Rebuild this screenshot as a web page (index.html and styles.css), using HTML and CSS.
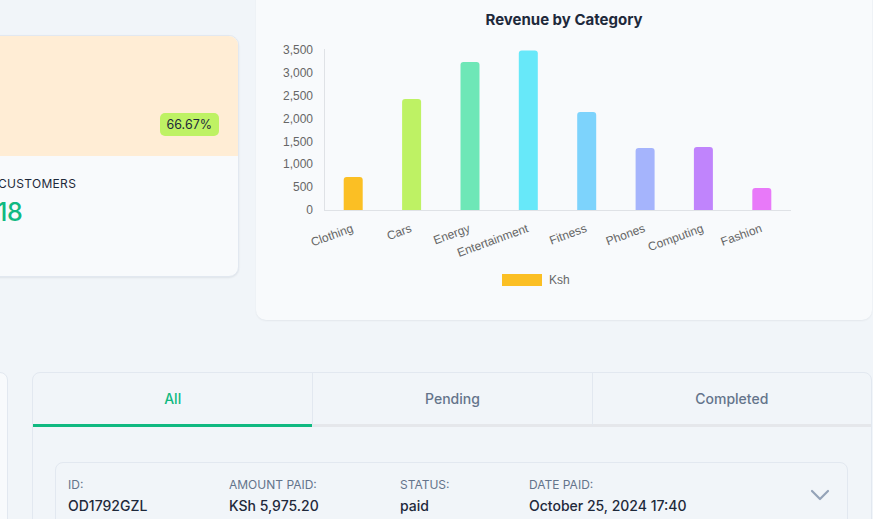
FILE: index.html
```html
<!DOCTYPE html>
<html lang="en">
<head>
<meta charset="utf-8">
<title>Dashboard</title>
<link rel="stylesheet" href="styles.css">
</head>
<body>
<div class="page">
  <section class="top-row">
    <div class="stat-card">
      <div class="stat-head">
        <span class="badge">66.67%</span>
      </div>
      <div class="stat-body">
        <div class="stat-label">CUSTOMERS</div>
        <div class="stat-value">18</div>
      </div>
    </div>

    <div class="chart-card">
      <svg class="chart" width="616" height="340" viewBox="256 -20 616 340" xmlns="http://www.w3.org/2000/svg">
        <text class="chart-title" x="564" y="20.5">Revenue by Category</text>

        <g class="y-labels">
          <text x="313" y="211">0</text>
          <text x="313" y="188.14">500</text>
          <text x="313" y="165.29">1,000</text>
          <text x="313" y="142.43">1,500</text>
          <text x="313" y="119.57">2,000</text>
          <text x="313" y="96.71">2,500</text>
          <text x="313" y="73.86">3,000</text>
          <text x="313" y="51">3,500</text>
        </g>

        <line class="axis" x1="324.5" y1="49" x2="324.5" y2="210.5"/>
        <line class="axis" x1="324" y1="210.5" x2="791" y2="210.5"/>

        <path fill="#fbbf24" d="M343.7 210V180Q343.7 177 346.7 177H359.7Q362.7 177 362.7 180V210Z"/>
        <path fill="#bef264" d="M402.1 210V102Q402.1 99 405.1 99H418.1Q421.1 99 421.1 102V210Z"/>
        <path fill="#6ee7b7" d="M460.5 210V65Q460.5 62 463.5 62H476.5Q479.5 62 479.5 65V210Z"/>
        <path fill="#67e8f9" d="M518.8 210V53.5Q518.8 50.5 521.8 50.5H534.8Q537.8 50.5 537.8 53.5V210Z"/>
        <path fill="#7dd3fc" d="M577.2 210V115Q577.2 112 580.2 112H593.2Q596.2 112 596.2 115V210Z"/>
        <path fill="#a5b4fc" d="M635.6 210V151Q635.6 148 638.6 148H651.6Q654.6 148 654.6 151V210Z"/>
        <path fill="#c084fc" d="M693.9 210V150Q693.9 147 696.9 147H709.9Q712.9 147 712.9 150V210Z"/>
        <path fill="#e879f9" d="M752.3 210V191Q752.3 188 755.3 188H768.3Q771.3 188 771.3 191V210Z"/>

        <g class="x-labels">
          <text x="353" y="228.5" transform="rotate(-20 353 228.5)">Clothing</text>
          <text x="411.4" y="228.5" transform="rotate(-20 411.4 228.5)">Cars</text>
          <text x="469.8" y="228.5" transform="rotate(-20 469.8 228.5)">Energy</text>
          <text x="528.1" y="228.5" transform="rotate(-20 528.1 228.5)">Entertainment</text>
          <text x="586.5" y="228.5" transform="rotate(-20 586.5 228.5)">Fitness</text>
          <text x="644.9" y="228.5" transform="rotate(-20 644.9 228.5)">Phones</text>
          <text x="703.2" y="228.5" transform="rotate(-20 703.2 228.5)">Computing</text>
          <text x="761.6" y="228.5" transform="rotate(-20 761.6 228.5)">Fashion</text>
        </g>

        <rect x="502" y="274" width="40" height="12" fill="#fbbf24"/>
        <text class="legend-label" x="549" y="280.5">Ksh</text>
      </svg>
    </div>
  </section>

  <section class="bottom-row">
    <div class="side-card"></div>
    <div class="orders">
      <div class="tabs">
        <div class="tab active">All</div>
        <div class="tab">Pending</div>
        <div class="tab">Completed</div>
      </div>
      <div class="orders-body">
        <div class="order">
          <div class="order-fields">
            <div class="field">
              <div class="field-label">ID:</div>
              <div class="field-value">OD1792GZL</div>
            </div>
            <div class="field">
              <div class="field-label">AMOUNT PAID:</div>
              <div class="field-value">KSh 5,975.20</div>
            </div>
            <div class="field">
              <div class="field-label">STATUS:</div>
              <div class="field-value">paid</div>
            </div>
            <div class="field">
              <div class="field-label">DATE PAID:</div>
              <div class="field-value">October 25, 2024 17:40</div>
            </div>
          </div>
          <svg class="chevron" width="20" height="12" viewBox="0 0 20 12" xmlns="http://www.w3.org/2000/svg">
            <polyline points="2,2 10,10 18,2" fill="none" stroke="#94a3b8" stroke-width="2.2" stroke-linecap="round" stroke-linejoin="round"/>
          </svg>
        </div>
      </div>
    </div>
  </section>
</div>
</body>
</html>
```

FILE: styles.css
```css
* {
  box-sizing: border-box;
}

html,
body {
  margin: 0;
  padding: 0;
}

body {
  background: #f1f5f9;
  font-family: Inter, "Noto Sans", "Liberation Sans", sans-serif;
  color: #1e293b;
  width: 873px;
  height: 519px;
  overflow: hidden;
}

.page {
  padding-right: 1px;
}

/* ---------- top row ---------- */
.top-row {
  display: grid;
  grid-template-columns: 239px 1fr;
  column-gap: 17px;
  align-items: start;
}

.stat-card {
  margin-left: -23px;
  margin-top: 35px;
  border: 1px solid #e2e8f0;
  border-radius: 10px;
  overflow: hidden;
  background: #f8fafc;
  box-shadow: 0 1px 2px rgba(15, 23, 42, 0.08);
}

.stat-head {
  height: 120px;
  background: #ffedd5;
  display: flex;
  align-items: flex-end;
  justify-content: flex-end;
  padding: 0 19px 20px;
}

.badge {
  background: #bef264;
  border-radius: 5px;
  font-size: 12.5px;
  line-height: 15px;
  padding: 4px 7px;
  color: #1e293b;
}

.stat-body {
  height: 120px;
  padding: 20px 20px 0;
}

.stat-label {
  font-size: 12px;
  line-height: 16px;
  letter-spacing: 0.3px;
  color: #1e293b;
}

.stat-value {
  margin-top: 4px;
  margin-left: -1px;
  font-size: 25px;
  line-height: 32px;
  font-weight: 500;
  letter-spacing: -0.5px;
  color: #10b981;
}

.chart-card {
  margin-top: -20px;
  height: 340px;
  background: #f8fafc;
  border-radius: 10px;
  overflow: hidden;
  box-shadow: 0 1px 2px rgba(15, 23, 42, 0.06);
}

.chart {
  display: block;
}

.chart-title {
  font-family: Inter, "Noto Sans", sans-serif;
  font-size: 15px;
  font-weight: 700;
  fill: #1e293b;
  text-anchor: middle;
  dominant-baseline: middle;
}

.y-labels text {
  font-family: "Liberation Sans", Arial, sans-serif;
  font-size: 12px;
  fill: #666666;
  text-anchor: end;
  dominant-baseline: middle;
}

.x-labels text {
  font-family: "Liberation Sans", Arial, sans-serif;
  font-size: 12px;
  fill: #666666;
  text-anchor: end;
  dominant-baseline: middle;
}

.axis {
  stroke: #dfe2e6;
  stroke-width: 1;
}

.legend-label {
  font-family: "Liberation Sans", Arial, sans-serif;
  font-size: 12px;
  fill: #666666;
  dominant-baseline: middle;
}

/* ---------- bottom row ---------- */
.bottom-row {
  display: grid;
  grid-template-columns: 8px 1fr;
  column-gap: 24px;
  margin-top: 52px;
  align-items: start;
}

.side-card {
  margin-left: -100px;
  height: 200px;
  background: #f8fafc;
  border: 1px solid #e2e8f0;
  border-radius: 8px;
}

.orders {
  border: 1px solid #e2e8f0;
  border-radius: 8px;
  height: 200px;
}

.tabs {
  display: grid;
  grid-template-columns: repeat(3, 1fr);
}

.tab {
  height: 54px;
  display: flex;
  align-items: center;
  justify-content: center;
  border-bottom: 3px solid #e5e7eb;
  font-size: 14px;
  font-weight: 500;
  color: #64748b;
}

.tab + .tab {
  border-left: 1px solid #e2e8f0;
}

.tab.active {
  color: #10b981;
  border-bottom-color: #10b981;
}

.orders-body {
  padding: 35px 23px 22px 22px;
}

.order {
  display: flex;
  align-items: center;
  border: 1px solid #e2e8f0;
  border-radius: 8px;
  padding: 14px 17px 14px 12px;
}

.order-fields {
  flex: 1;
  display: grid;
  grid-template-columns: 161px 171px 129px 1fr;
}

.field-label {
  font-size: 12px;
  line-height: 16px;
  color: #64748b;
}

.field-value {
  margin-top: 3px;
  font-size: 14px;
  line-height: 20px;
  font-weight: 500;
  color: #1e293b;
}

.chevron {
  display: block;
  margin-top: -4px;
}
```
